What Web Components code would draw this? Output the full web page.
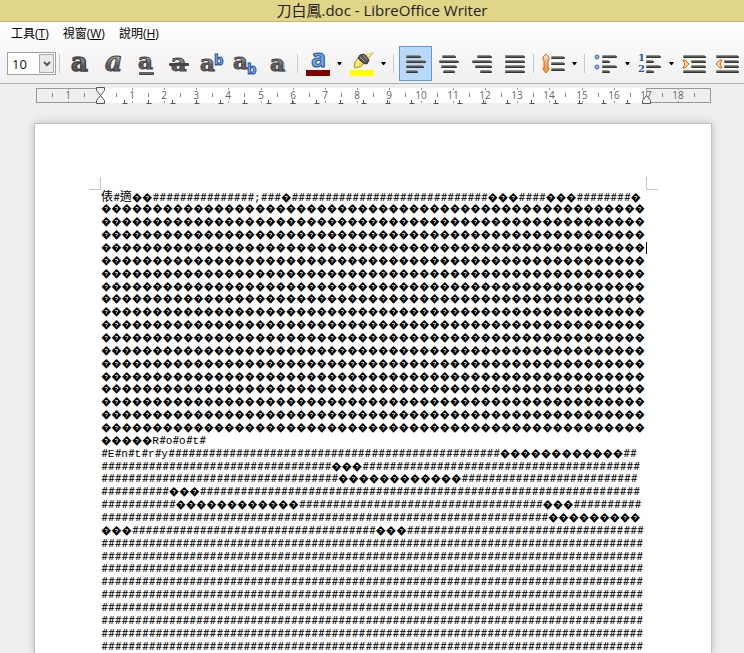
<!DOCTYPE html>
<html lang="zh-Hant">
<head>
<meta charset="utf-8">
<title>刀白鳳.doc - LibreOffice Writer</title>
<style>
html, body { margin: 0; height: 100%; }
body { overflow: hidden; background: #efefef; font-family: "Open Sans", "Noto Sans CJK TC", sans-serif; }
</style>
</head>
<body>
<writer-app></writer-app>
<script>
const define = (name, html, setup) => customElements.define(name, class extends HTMLElement {
  connectedCallback() {
    if (this.shadowRoot) return;
    const root = this.attachShadow({ mode: 'open' });
    root.innerHTML = html;
    if (setup) setup(root, this);
  }
});

define('title-bar', `<style>
:host { display: flex; justify-content: center; align-items: center; height: 21px; padding-left: 20px; background: #e1d588; border-bottom: 1px solid #bfb574; color: #222; font-size: 15px; line-height: 18px; white-space: nowrap; }
span { padding-bottom: 2px; }
</style><span><slot></slot></span>`);

define('menu-bar', `<style>
:host { display: flex; gap: 14px; height: 24px; padding-left: 11px; align-items: center; font: 12px/20px "Open Sans", "Noto Sans CJK TC", sans-serif; color: #000; }
button { all: unset; white-space: nowrap; }
</style><button>工具(<u>T</u>)</button><button>視窗(<u>W</u>)</button><button>說明(<u>H</u>)</button>`);

const line = (x, y, w) => `<rect x="${x}" y="${y + 1}" width="${w}" height="2" rx="1" fill="#333530"/><rect x="${x}" y="${y}" width="${w - 1}" height="2" rx="1" fill="#8f918a"/><rect x="${x + 1}" y="${y + 1}" width="${w - 1}" height="1" fill="#5a5c56"/>`;
const grad = `<linearGradient id="g" x1="0" y1="0" x2="0" y2="1"><stop offset=".3" stop-color="#bbb"/><stop offset=".65" stop-color="#555"/><stop offset="1" stop-color="#888"/></linearGradient><linearGradient id="o" x1="0" y1="0" x2="0" y2="1"><stop offset="0" stop-color="#fff0e0"/><stop offset=".5" stop-color="#e8ac78"/><stop offset="1" stop-color="#fa9a18"/></linearGradient>`;
const letter = (x, y, size, extra = '') => `<text x="${x}" y="${y}" font-family="DejaVu Serif" font-weight="bold" font-size="${size}" fill="url(#g)" stroke="#444" ${extra}>a</text>`;
const blueB = (x, y) => `<text x="${x}" y="${y}" font-family="Open Sans" font-weight="bold" font-size="15" fill="#8db7e8" stroke="#245096">b</text>`;
const ICONS = {
  bold: letter(3, 19, 26, 'stroke-width="1.5"'),
  italic: letter(4, 19, 27, 'font-style="italic" font-weight="normal"'),
  underline: letter(4, 17, 23) + '<rect x="5" y="20" width="15" height="3" rx="1" fill="#444"/><path d="M6 21h13" stroke="#888"/>',
  strike: letter(4, 19, 24) + '<rect x="2" y="11" width="20" height="3" rx="1" fill="#444"/>',
  sup: letter(0, 19, 23) + blueB(14, 13),
  sub: letter(0, 17, 23) + blueB(14, 22),
  shadow: '<text x="6" y="20" font-family="DejaVu Serif" font-weight="bold" font-size="23" fill="#bbb">a</text>' + letter(4, 19, 23),
  color: '<text x="5" y="15" font-family="Open Sans" font-weight="bold" font-size="25" fill="#75a7df" stroke="#245096">a</text><rect y="18" width="24" height="6" fill="#800000"/>',
  highlight: '<rect y="18" width="24" height="6" fill="#ff0"/><path d="M15 3 23 0h1l-6 8z" fill="#e0bc38"/><path d="m17 3 6-3-5 6z" fill="#f8eea0"/><path d="m8 6 6 6-4 3-5 1-1-1 1-5z" fill="#f4d94a" stroke="#c79a10"/><path d="m7 9 2-1v5l-3 1z" fill="#fff6b0"/><path d="m10 3 4-1 5 6-2 4-4-1-5-5z" fill="#555" stroke="#333"/><path d="m10 5 5 5M13 3l4 5" stroke="#aaa"/>',
  left: line(2, 3, 15) + line(2, 8, 20) + line(2, 13, 18) + line(2, 18, 12),
  center: line(5, 3, 14) + line(2, 8, 20) + line(4, 13, 16) + line(6, 18, 12),
  right: line(7, 3, 15) + line(2, 8, 20) + line(5, 13, 17) + line(10, 18, 12),
  justify: line(2, 3, 20) + line(2, 8, 20) + line(2, 13, 20) + line(2, 18, 20),
  spacing: line(10, 4, 14) + line(10, 10, 14) + line(10, 16, 14) + '<path d="M5 2 8 5v3H7v8h1v1l-3 4-3-4v-1h1V8H2V5z" fill="url(#o)" stroke="#d2691e"/>',
  bullets: line(8, 3, 15) + line(8, 8, 8) + line(8, 13, 15) + line(8, 18, 8) + '<g fill="#8fb5e6" stroke="#3d6ca8"><circle cx="3" cy="5" r="2"/><circle cx="3" cy="15" r="2"/></g>',
  numbers: line(8, 3, 15) + line(8, 8, 8) + line(8, 13, 15) + line(8, 18, 8) + '<g fill="#2c5c9e" font-family="DejaVu Serif" font-weight="bold" font-size="10"><text y="9">1</text><text y="20">2</text></g>',
  indent: line(1, 3, 23) + line(9, 8, 15) + line(9, 13, 15) + line(1, 18, 23) + '<path d="m1 8 2 0 4 4-4 4H1l2-4z" fill="#ffd8ac" stroke="#e0620d"/>',
  outdent: line(1, 3, 23) + line(9, 8, 15) + line(9, 13, 15) + line(1, 18, 23) + '<path d="M7 8H5l-4 4 4 4h2l-2-4z" fill="#ffd8ac" stroke="#e0620d"/>'
};
define('tool-icon', `<style>
:host { display: block; flex: none; }
button { all: unset; box-sizing: border-box; display: grid; place-items: center; width: 33px; height: 35px; }
:host([active]) button { background: #b8d8f8; border: 1px solid #5a9bdb; }
svg { display: block; width: 24px; height: 24px; overflow: visible; }
</style><button></button>`, (root, el) => {
  const n = el.getAttribute('name'), b = root.querySelector('button');
  b.setAttribute('aria-label', n);
  b.innerHTML = `<svg viewBox="0 0 24 24"><defs>${grad}</defs>${ICONS[n]}</svg>`;
});
define('drop-arrow', `<style>
:host { display: block; flex: none; }
button { all: unset; display: grid; place-items: center; width: 11px; height: 35px; }
svg { display: block; }
</style><button aria-label="more"><svg width="5" height="3"><path d="M0 0h5L3 3H2z"/></svg></button>`);

define('size-box', `<style>
:host { display: flex; box-sizing: border-box; flex: none; width: 49px; height: 23px; border: 1px solid #a0a0a0; background: #fff; }
input { all: unset; width: 26px; padding-left: 4px; font: 13px/20px "Open Sans", sans-serif; color: #111; }
button { all: unset; box-sizing: border-box; width: 17px; height: 19px; margin: 1px; border: 1px solid #aaa; background: #eaeaea; display: grid; place-items: center; }
</style><input aria-label="Font size" value="10"><button aria-label="Choose size"><svg width="8" height="6"><path d="m1 1 3 3 3-3" fill="none" stroke="#555" stroke-width="2"/></svg></button>`);

define('tool-bar', `<style>
:host { display: flex; align-items: center; height: 35px; padding: 0 0 2px 7px; overflow: hidden; }
i { flex: none; width: 1px; height: 19px; margin: 0 3px; background: #c8c8c8; }
.g { display: flex; }
</style><size-box></size-box><i></i>
<div class="g"><tool-icon name="bold"></tool-icon><tool-icon name="italic"></tool-icon><tool-icon name="underline"></tool-icon><tool-icon name="strike"></tool-icon><tool-icon name="sup"></tool-icon><tool-icon name="sub"></tool-icon><tool-icon name="shadow"></tool-icon></div>
<i></i>
<div class="g"><tool-icon name="color"></tool-icon><drop-arrow></drop-arrow><tool-icon name="highlight"></tool-icon><drop-arrow></drop-arrow></div>
<i style="margin:0 5px 0 4px"></i>
<div class="g"><tool-icon name="left" active></tool-icon><tool-icon name="center"></tool-icon><tool-icon name="right"></tool-icon><tool-icon name="justify"></tool-icon></div>
<i style="margin:0 2px"></i>
<tool-icon name="spacing"></tool-icon><drop-arrow></drop-arrow>
<i style="margin:0 4px"></i>
<div class="g"><tool-icon name="bullets"></tool-icon><drop-arrow></drop-arrow><tool-icon name="numbers"></tool-icon><drop-arrow></drop-arrow><tool-icon name="indent"></tool-icon><tool-icon name="outdent"></tool-icon></div>`);

define('doc-ruler', `<style>
:host { display: block; padding: 4px 0 0 36px; height: 35px; }
svg { display: block; overflow: visible; }
text { font: 10px "Open Sans", sans-serif; fill: #666; text-anchor: middle; }
</style><svg width="676" height="17"></svg>`, root => {
  const unit = 32.1, zero = 64;
  let s = '<rect x="64" width="546" height="15" fill="#fff"/><g fill="none" stroke="#999"><rect x=".5" y=".5" width="64" height="14"/><rect x="610.5" y=".5" width="64" height="14"/></g>';
  for (let n = -1; n <= 18; n++) {
    const x = Math.round(zero + n * unit);
    if (n && n !== 17) s += `<path d="M${x}.5 0v2m0 11v2" stroke="#999"/>`;
    if (n) s += `<text x="${x}" y="11">${Math.abs(n)}</text>`;
    const h = Math.round(x + unit / 2);
    s += `<path d="M${h}.5 5v4" stroke="#888"/>`;
  }
  s += `<path d="M16.5 5v4" stroke="#888"/>`;
  for (let i = 1; i < 23; i++) {
    const x = Math.round(zero + i * 23.95);
    s += `<path d="M${x}.5 12v3m-2 .5h5" stroke="#555"/>`;
  }
  s += '<g fill="#f4f4f4" stroke="#555"><path d="M60.5 -.5h8v3l-4 5 4 5v3h-8v-3l4-5-4-5z"/><path d="M606.5 15.5v-3l4-5 4 5v3z"/></g>';
  root.querySelector('svg').innerHTML = s;
});

const h = n => '#'.repeat(n), d = n => '\uFFFD'.repeat(n);
const ROWS = [
  '俵#適' + d(2) + h(15) + ';' + h(3) + d(1) + h(29) + d(3) + h(4) + d(3) + h(8) + d(1),
  ...Array(18).fill(d(53)),
  d(5) + 'R#o#o#t#',
  '#E#n#t#r#y' + h(49) + d(12) + h(2),
  h(34) + d(3) + h(41),
  h(35) + d(12) + h(26),
  h(10) + d(3) + h(65),
  h(11) + d(12) + h(36) + d(3) + h(10),
  h(66) + d(9),
  d(3) + h(36) + d(3) + h(35),
  ...Array(9).fill(h(80))
];
define('text-line', `<style>
:host { display: block; height: 13px; white-space: pre; font: 11px/13px "Liberation Mono", "Noto Sans CJK TC", monospace; color: #000; }
b { font: 10px/10px Roboto, "DejaVu Sans", sans-serif; }
span { font: 11px/11px Roboto, sans-serif; }
em { font: 12px/10px "Noto Sans CJK TC", sans-serif; }
.caret { display: inline-block; width: 1px; height: 12px; margin-left: 1px; background: #000; vertical-align: top; }
</style>`, (root, el) => {
  root.innerHTML += ROWS[+el.getAttribute('row')]
    .replace(/#+|\uFFFD+|[\u4e00-\u9fff]/g, m => m[0] === '#' ? `<span>${m}</span>` : m[0] === '\uFFFD' ? `<b>${m}</b>` : `<em>${m}</em>`)
    + (el.hasAttribute('caret') ? '<i class="caret"></i>' : '');
});

define('doc-page', `<style>
:host { display: block; box-sizing: border-box; flex: 1; margin: 0 32px 0 34px; border: 1px solid #c0c0c0; border-bottom: 0; background: #fff; box-shadow: 0 0 8px #bbb; padding: 53px 53px 0 54px; }
.marks { display: flex; justify-content: space-between; height: 13px; }
.marks i { box-sizing: border-box; width: 12px; border: 1px solid #c4c4c4; border-width: 0 1px 1px 0; }
.marks i + i { border-width: 0 0 1px 1px; }
.body { padding: 1px 0 0 12px; }
text-line:nth-child(7n+1) { height: 12px; }
</style><div class="marks"><i></i><i></i></div><div class="body"></div>`, root => {
  root.querySelector('.body').innerHTML = ROWS.map((_, i) => `<text-line row="${i}"${i === 4 ? ' caret' : ''}></text-line>`).join('');
});

define('writer-app', `<style>
:host { display: flex; flex-direction: column; height: 100%; overflow: hidden; }
header { flex: none; background: linear-gradient(#fff, #f0f0f0); border-bottom: 1px solid #b0b0b0; }
title-bar, doc-ruler { flex: none; }
</style><title-bar>刀白鳳.doc - LibreOffice Writer</title-bar>
<header><menu-bar></menu-bar><tool-bar></tool-bar></header>
<doc-ruler></doc-ruler>
<doc-page></doc-page>`);
</script>
</body>
</html>
